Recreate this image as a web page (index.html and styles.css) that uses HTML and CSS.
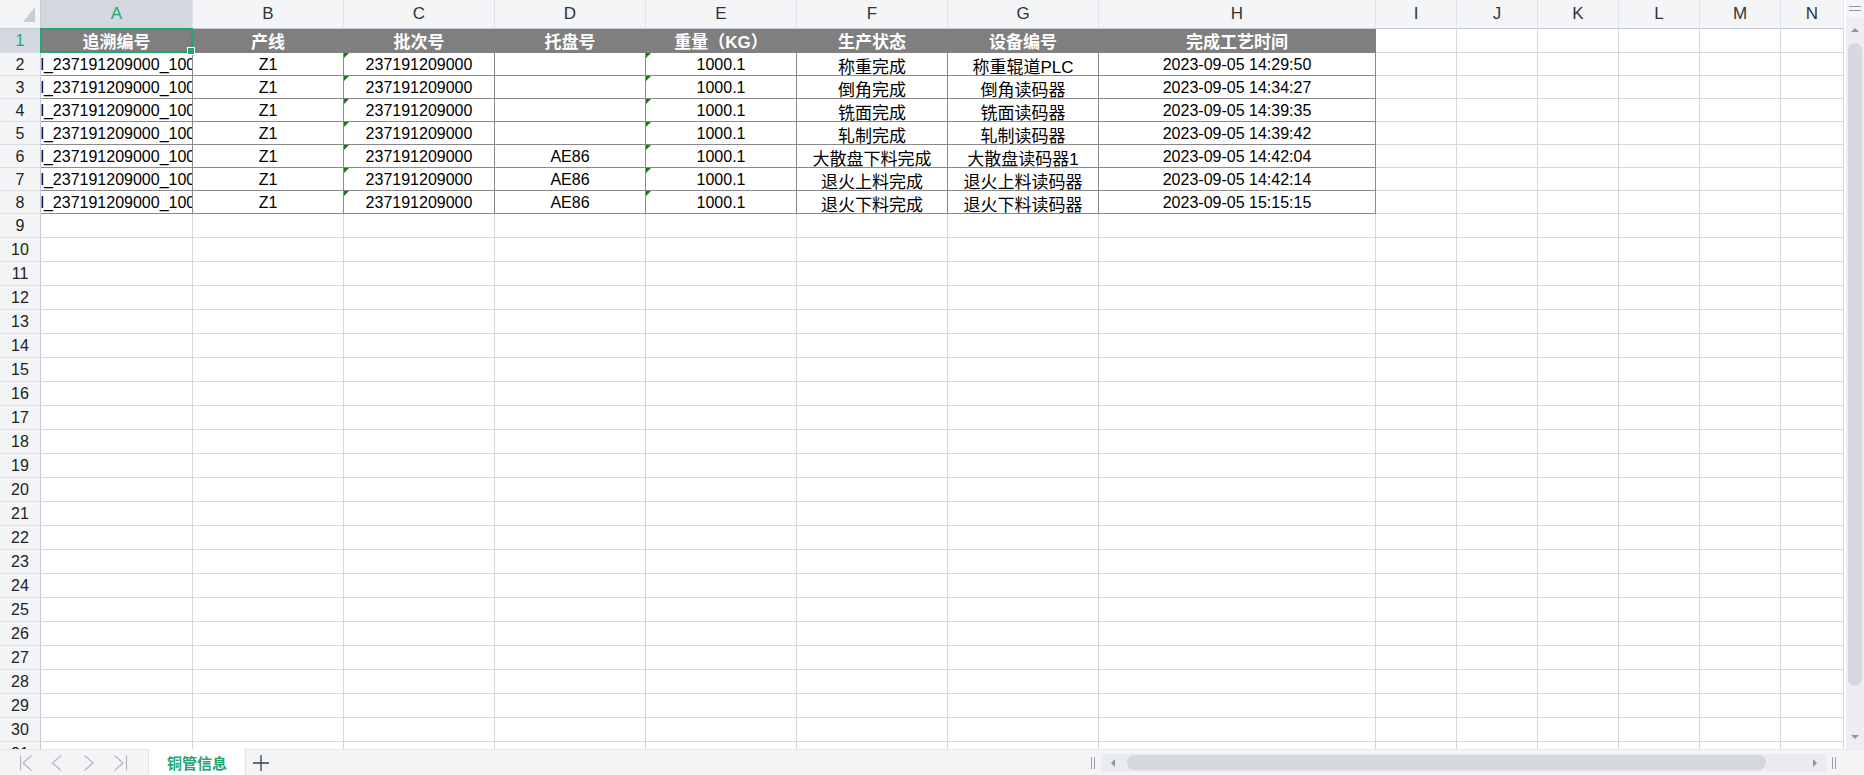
FILE: index.html
```html
<!DOCTYPE html>
<html lang="zh-CN">
<head>
<meta charset="utf-8">
<title>铜管信息</title>
<link rel="stylesheet" href="styles.css">
</head>
<body>
<div class="app">
  <div class="main">
    <div class="sheet">
      <div class="corner"><svg width="12" height="15" viewBox="0 0 12 15"><polygon points="12,0 12,15 0,15" fill="#c9ccd3"/></svg></div>
      <div class="ch act">A</div><div class="ch">B</div><div class="ch">C</div><div class="ch">D</div><div class="ch">E</div><div class="ch">F</div><div class="ch">G</div><div class="ch">H</div><div class="ch">I</div><div class="ch">J</div><div class="ch">K</div><div class="ch">L</div><div class="ch">M</div><div class="ch">N</div>

      <div class="rh act">1</div><div class="hd a1"><span class="sel"></span>追溯编号</div><div class="hd">产线</div><div class="hd">批次号</div><div class="hd">托盘号</div><div class="hd">重量（KG）</div><div class="hd">生产状态</div><div class="hd">设备编号</div><div class="hd">完成工艺时间</div><div></div><div></div><div></div><div></div><div></div><div></div>

      <div class="rh rd">2</div><div class="d">Hl_237191209000_1001</div><div class="d">Z1</div><div class="d t">237191209000</div><div class="d"></div><div class="d t">1000.1</div><div class="d z">称重完成</div><div class="d z">称重辊道PLC</div><div class="d">2023-09-05 14:29:50</div><div></div><div></div><div></div><div></div><div></div><div></div>
      <div class="rh rd">3</div><div class="d">Hl_237191209000_1001</div><div class="d">Z1</div><div class="d t">237191209000</div><div class="d"></div><div class="d t">1000.1</div><div class="d z">倒角完成</div><div class="d z">倒角读码器</div><div class="d">2023-09-05 14:34:27</div><div></div><div></div><div></div><div></div><div></div><div></div>
      <div class="rh rd">4</div><div class="d">Hl_237191209000_1001</div><div class="d">Z1</div><div class="d t">237191209000</div><div class="d"></div><div class="d t">1000.1</div><div class="d z">铣面完成</div><div class="d z">铣面读码器</div><div class="d">2023-09-05 14:39:35</div><div></div><div></div><div></div><div></div><div></div><div></div>
      <div class="rh rd">5</div><div class="d">Hl_237191209000_1001</div><div class="d">Z1</div><div class="d t">237191209000</div><div class="d"></div><div class="d t">1000.1</div><div class="d z">轧制完成</div><div class="d z">轧制读码器</div><div class="d">2023-09-05 14:39:42</div><div></div><div></div><div></div><div></div><div></div><div></div>
      <div class="rh rd">6</div><div class="d">Hl_237191209000_1001</div><div class="d">Z1</div><div class="d t">237191209000</div><div class="d">AE86</div><div class="d t">1000.1</div><div class="d z">大散盘下料完成</div><div class="d z">大散盘读码器1</div><div class="d">2023-09-05 14:42:04</div><div></div><div></div><div></div><div></div><div></div><div></div>
      <div class="rh rd">7</div><div class="d">Hl_237191209000_1001</div><div class="d">Z1</div><div class="d t">237191209000</div><div class="d">AE86</div><div class="d t">1000.1</div><div class="d z">退火上料完成</div><div class="d z">退火上料读码器</div><div class="d">2023-09-05 14:42:14</div><div></div><div></div><div></div><div></div><div></div><div></div>
      <div class="rh rd">8</div><div class="d">Hl_237191209000_1001</div><div class="d">Z1</div><div class="d t">237191209000</div><div class="d">AE86</div><div class="d t">1000.1</div><div class="d z">退火下料完成</div><div class="d z">退火下料读码器</div><div class="d">2023-09-05 15:15:15</div><div></div><div></div><div></div><div></div><div></div><div></div>

      <div class="rh">9</div><div></div><div></div><div></div><div></div><div></div><div></div><div></div><div></div><div></div><div></div><div></div><div></div><div></div><div></div>
      <div class="rh">10</div><div></div><div></div><div></div><div></div><div></div><div></div><div></div><div></div><div></div><div></div><div></div><div></div><div></div><div></div>
      <div class="rh">11</div><div></div><div></div><div></div><div></div><div></div><div></div><div></div><div></div><div></div><div></div><div></div><div></div><div></div><div></div>
      <div class="rh">12</div><div></div><div></div><div></div><div></div><div></div><div></div><div></div><div></div><div></div><div></div><div></div><div></div><div></div><div></div>
      <div class="rh">13</div><div></div><div></div><div></div><div></div><div></div><div></div><div></div><div></div><div></div><div></div><div></div><div></div><div></div><div></div>
      <div class="rh">14</div><div></div><div></div><div></div><div></div><div></div><div></div><div></div><div></div><div></div><div></div><div></div><div></div><div></div><div></div>
      <div class="rh">15</div><div></div><div></div><div></div><div></div><div></div><div></div><div></div><div></div><div></div><div></div><div></div><div></div><div></div><div></div>
      <div class="rh">16</div><div></div><div></div><div></div><div></div><div></div><div></div><div></div><div></div><div></div><div></div><div></div><div></div><div></div><div></div>
      <div class="rh">17</div><div></div><div></div><div></div><div></div><div></div><div></div><div></div><div></div><div></div><div></div><div></div><div></div><div></div><div></div>
      <div class="rh">18</div><div></div><div></div><div></div><div></div><div></div><div></div><div></div><div></div><div></div><div></div><div></div><div></div><div></div><div></div>
      <div class="rh">19</div><div></div><div></div><div></div><div></div><div></div><div></div><div></div><div></div><div></div><div></div><div></div><div></div><div></div><div></div>
      <div class="rh">20</div><div></div><div></div><div></div><div></div><div></div><div></div><div></div><div></div><div></div><div></div><div></div><div></div><div></div><div></div>
      <div class="rh">21</div><div></div><div></div><div></div><div></div><div></div><div></div><div></div><div></div><div></div><div></div><div></div><div></div><div></div><div></div>
      <div class="rh">22</div><div></div><div></div><div></div><div></div><div></div><div></div><div></div><div></div><div></div><div></div><div></div><div></div><div></div><div></div>
      <div class="rh">23</div><div></div><div></div><div></div><div></div><div></div><div></div><div></div><div></div><div></div><div></div><div></div><div></div><div></div><div></div>
      <div class="rh">24</div><div></div><div></div><div></div><div></div><div></div><div></div><div></div><div></div><div></div><div></div><div></div><div></div><div></div><div></div>
      <div class="rh">25</div><div></div><div></div><div></div><div></div><div></div><div></div><div></div><div></div><div></div><div></div><div></div><div></div><div></div><div></div>
      <div class="rh">26</div><div></div><div></div><div></div><div></div><div></div><div></div><div></div><div></div><div></div><div></div><div></div><div></div><div></div><div></div>
      <div class="rh">27</div><div></div><div></div><div></div><div></div><div></div><div></div><div></div><div></div><div></div><div></div><div></div><div></div><div></div><div></div>
      <div class="rh">28</div><div></div><div></div><div></div><div></div><div></div><div></div><div></div><div></div><div></div><div></div><div></div><div></div><div></div><div></div>
      <div class="rh">29</div><div></div><div></div><div></div><div></div><div></div><div></div><div></div><div></div><div></div><div></div><div></div><div></div><div></div><div></div>
      <div class="rh">30</div><div></div><div></div><div></div><div></div><div></div><div></div><div></div><div></div><div></div><div></div><div></div><div></div><div></div><div></div>
      <div class="rh">31</div><div></div><div></div><div></div><div></div><div></div><div></div><div></div><div></div><div></div><div></div><div></div><div></div><div></div><div></div>
    </div>
    <div class="vscroll">
      <div class="vtop"><i></i><i></i></div>
      <div class="vtrack"><b class="up"></b><div class="vthumb"></div><b class="down"></b></div>
    </div>
  </div>
  <div class="bottom">
    <div class="nav">
      <svg width="16" height="16" viewBox="0 0 16 16"><path d="M2.5 0.5V15.5M13.5 0.5L5 8L13.5 15.5" fill="none" stroke="#b4b7be" stroke-width="1.2"/></svg>
      <svg width="16" height="16" viewBox="0 0 16 16"><path d="M11 0.5L2.5 8L11 15.5" fill="none" stroke="#b4b7be" stroke-width="1.2"/></svg>
      <svg width="16" height="16" viewBox="0 0 16 16"><path d="M2.5 0.5L11 8L2.5 15.5" fill="none" stroke="#b4b7be" stroke-width="1.2"/></svg>
      <svg width="16" height="16" viewBox="0 0 16 16"><path d="M0.5 0.5L9 8L0.5 15.5M12.5 0.5V15.5" fill="none" stroke="#b4b7be" stroke-width="1.2"/></svg>
    </div>
    <div class="tab">铜管信息</div>
    <div class="add"><svg width="18" height="18" viewBox="0 0 18 18"><path d="M9 1V17M1 9H17" fill="none" stroke="#3a3f4b" stroke-width="1.3"/></svg></div>
    <div class="spacer"></div>
    <div class="grip"><i></i><i></i></div>
    <div class="htrack"><b class="left"></b><div class="hthumb"></div><b class="right"></b></div>
    <div class="grip grip-r"><i></i><i></i></div>
    <div class="endpad"></div>
  </div>
</div>
</body>
</html>
```

FILE: styles.css
```css
* { box-sizing: border-box; margin: 0; padding: 0; }
html, body { width: 1864px; height: 775px; overflow: hidden; background: #fff; }
body { font-family: "Liberation Sans", "Noto Sans CJK SC", sans-serif; color: #000; }

.app { display: flex; flex-direction: column; height: 775px; }
.main { display: flex; height: 749px; overflow: hidden; }

.sheet {
  display: grid;
  grid-template-columns: 41px 152px repeat(6, 151px) 277px repeat(5, 81px) 63px;
  grid-template-rows: 29px 24px repeat(7, 23px) repeat(23, 24px);
  width: 1844px;
  flex: none;
  align-content: start;
}
.sheet > div {
  position: relative;
  display: flex;
  align-items: center;
  justify-content: center;
  overflow: hidden;
  white-space: nowrap;
  font-size: 16px;
  border-right: 1px solid #d3d7e0;
  border-bottom: 1px solid #d3d7e0;
}

.sheet > .corner {
  background: #f4f5f7;
  justify-content: flex-end;
  align-items: flex-end;
  padding: 0 5px 6px 0;
  border-right-color: #c5cad4;
  border-bottom-color: #c5cad4;
}
.sheet > .ch {
  background: #f4f5f7;
  font-size: 17px;
  color: #333;
  border-right-color: #e1e4ea;
  border-bottom-color: #c5cad4;
}
.sheet > .rh {
  background: #f4f5f7;
  color: #222;
  border-right-color: #c5cad4;
  border-bottom-color: #dde0e6;
}
.sheet > .rd { padding-top: 2px; }
.sheet > .act { background: #d4d7de; color: #1fa573; }

.sheet > .hd {
  background: #7f7f7f;
  color: #fff;
  font-weight: bold;
  font-size: 17px;
  border-right-color: #7f7f7f;
  border-bottom-color: #7f7f7f;
}
.sheet > .d { padding-top: 2px; border-right-color: #8a8a8a; border-bottom-color: #8a8a8a; }
.sheet > .z { font-size: 17px; }
.sheet > .t::before {
  content: "";
  position: absolute;
  left: 0;
  top: 0;
  border-top: 5px solid #157d15;
  border-right: 5px solid transparent;
}

.sheet > .a1 { overflow: visible; }
.sel {
  position: absolute;
  left: -1px; top: -1px; right: -1px; bottom: -1px;
  border: 2px solid #21a573;
  z-index: 2;
}
.sel::after {
  content: "";
  position: absolute;
  right: -4px;
  bottom: -4px;
  width: 6px;
  height: 6px;
  background: #21a573;
  border: 1px solid #fff;
}

.vscroll {
  width: 18px;
  margin-left: 2px;
  display: flex;
  flex-direction: column;
  background: #f4f5f7;
}
.vtop {
  height: 18px;
  display: flex;
  flex-direction: column;
  justify-content: center;
  align-items: center;
  gap: 3px;
  padding-bottom: 2px;
}
.vtop i { display: block; width: 12px; height: 1px; background: #8f95a3; }
.vtrack {
  flex: 1;
  background: #eceef2;
  display: flex;
  flex-direction: column;
  align-items: center;
  padding: 10px 0;
}
.up { width: 0; height: 0; border-left: 4px solid transparent; border-right: 4px solid transparent; border-bottom: 4px solid #8f95a3; }
.down { width: 0; height: 0; margin-top: auto; border-left: 4px solid transparent; border-right: 4px solid transparent; border-top: 4px solid #8f95a3; }
.vthumb { width: 14px; height: 643px; margin-top: 11px; border-radius: 7px; background: #d6d8df; }

.bottom {
  height: 26px;
  display: flex;
  background: #f3f4f6;
  border-top: 1px solid #e4e6eb;
}
.nav {
  width: 148px;
  display: flex;
  align-items: center;
  gap: 16px;
  padding-left: 18px;
}
.tab {
  width: 98px;
  margin-top: -1px;
  background: #fff;
  border-left: 1px solid #dfe2e7;
  border-right: 1px solid #dfe2e7;
  display: flex;
  align-items: center;
  justify-content: center;
  color: #1fa573;
  font-weight: bold;
  font-size: 15px;
}
.add { width: 30px; display: flex; align-items: center; justify-content: center; }
.spacer { flex: 1; }
.grip { width: 12px; display: flex; align-items: center; gap: 2px; padding-left: 1px; }
.grip i { display: block; width: 1px; height: 12px; background: #9aa0ad; }
.grip-r { padding-left: 6px; }
.htrack {
  width: 724px;
  height: 18px;
  align-self: center;
  background: #e9ebef;
  display: flex;
  align-items: center;
  padding: 0 9px;
}
.left { width: 0; height: 0; border-top: 4px solid transparent; border-bottom: 4px solid transparent; border-right: 4px solid #8f95a3; }
.right { width: 0; height: 0; margin-left: auto; border-top: 4px solid transparent; border-bottom: 4px solid transparent; border-left: 4px solid #8f95a3; }
.hthumb { width: 639px; height: 15px; margin-left: 12px; border-radius: 8px; background: #d5d7de; }
.endpad { width: 26px; }
```
